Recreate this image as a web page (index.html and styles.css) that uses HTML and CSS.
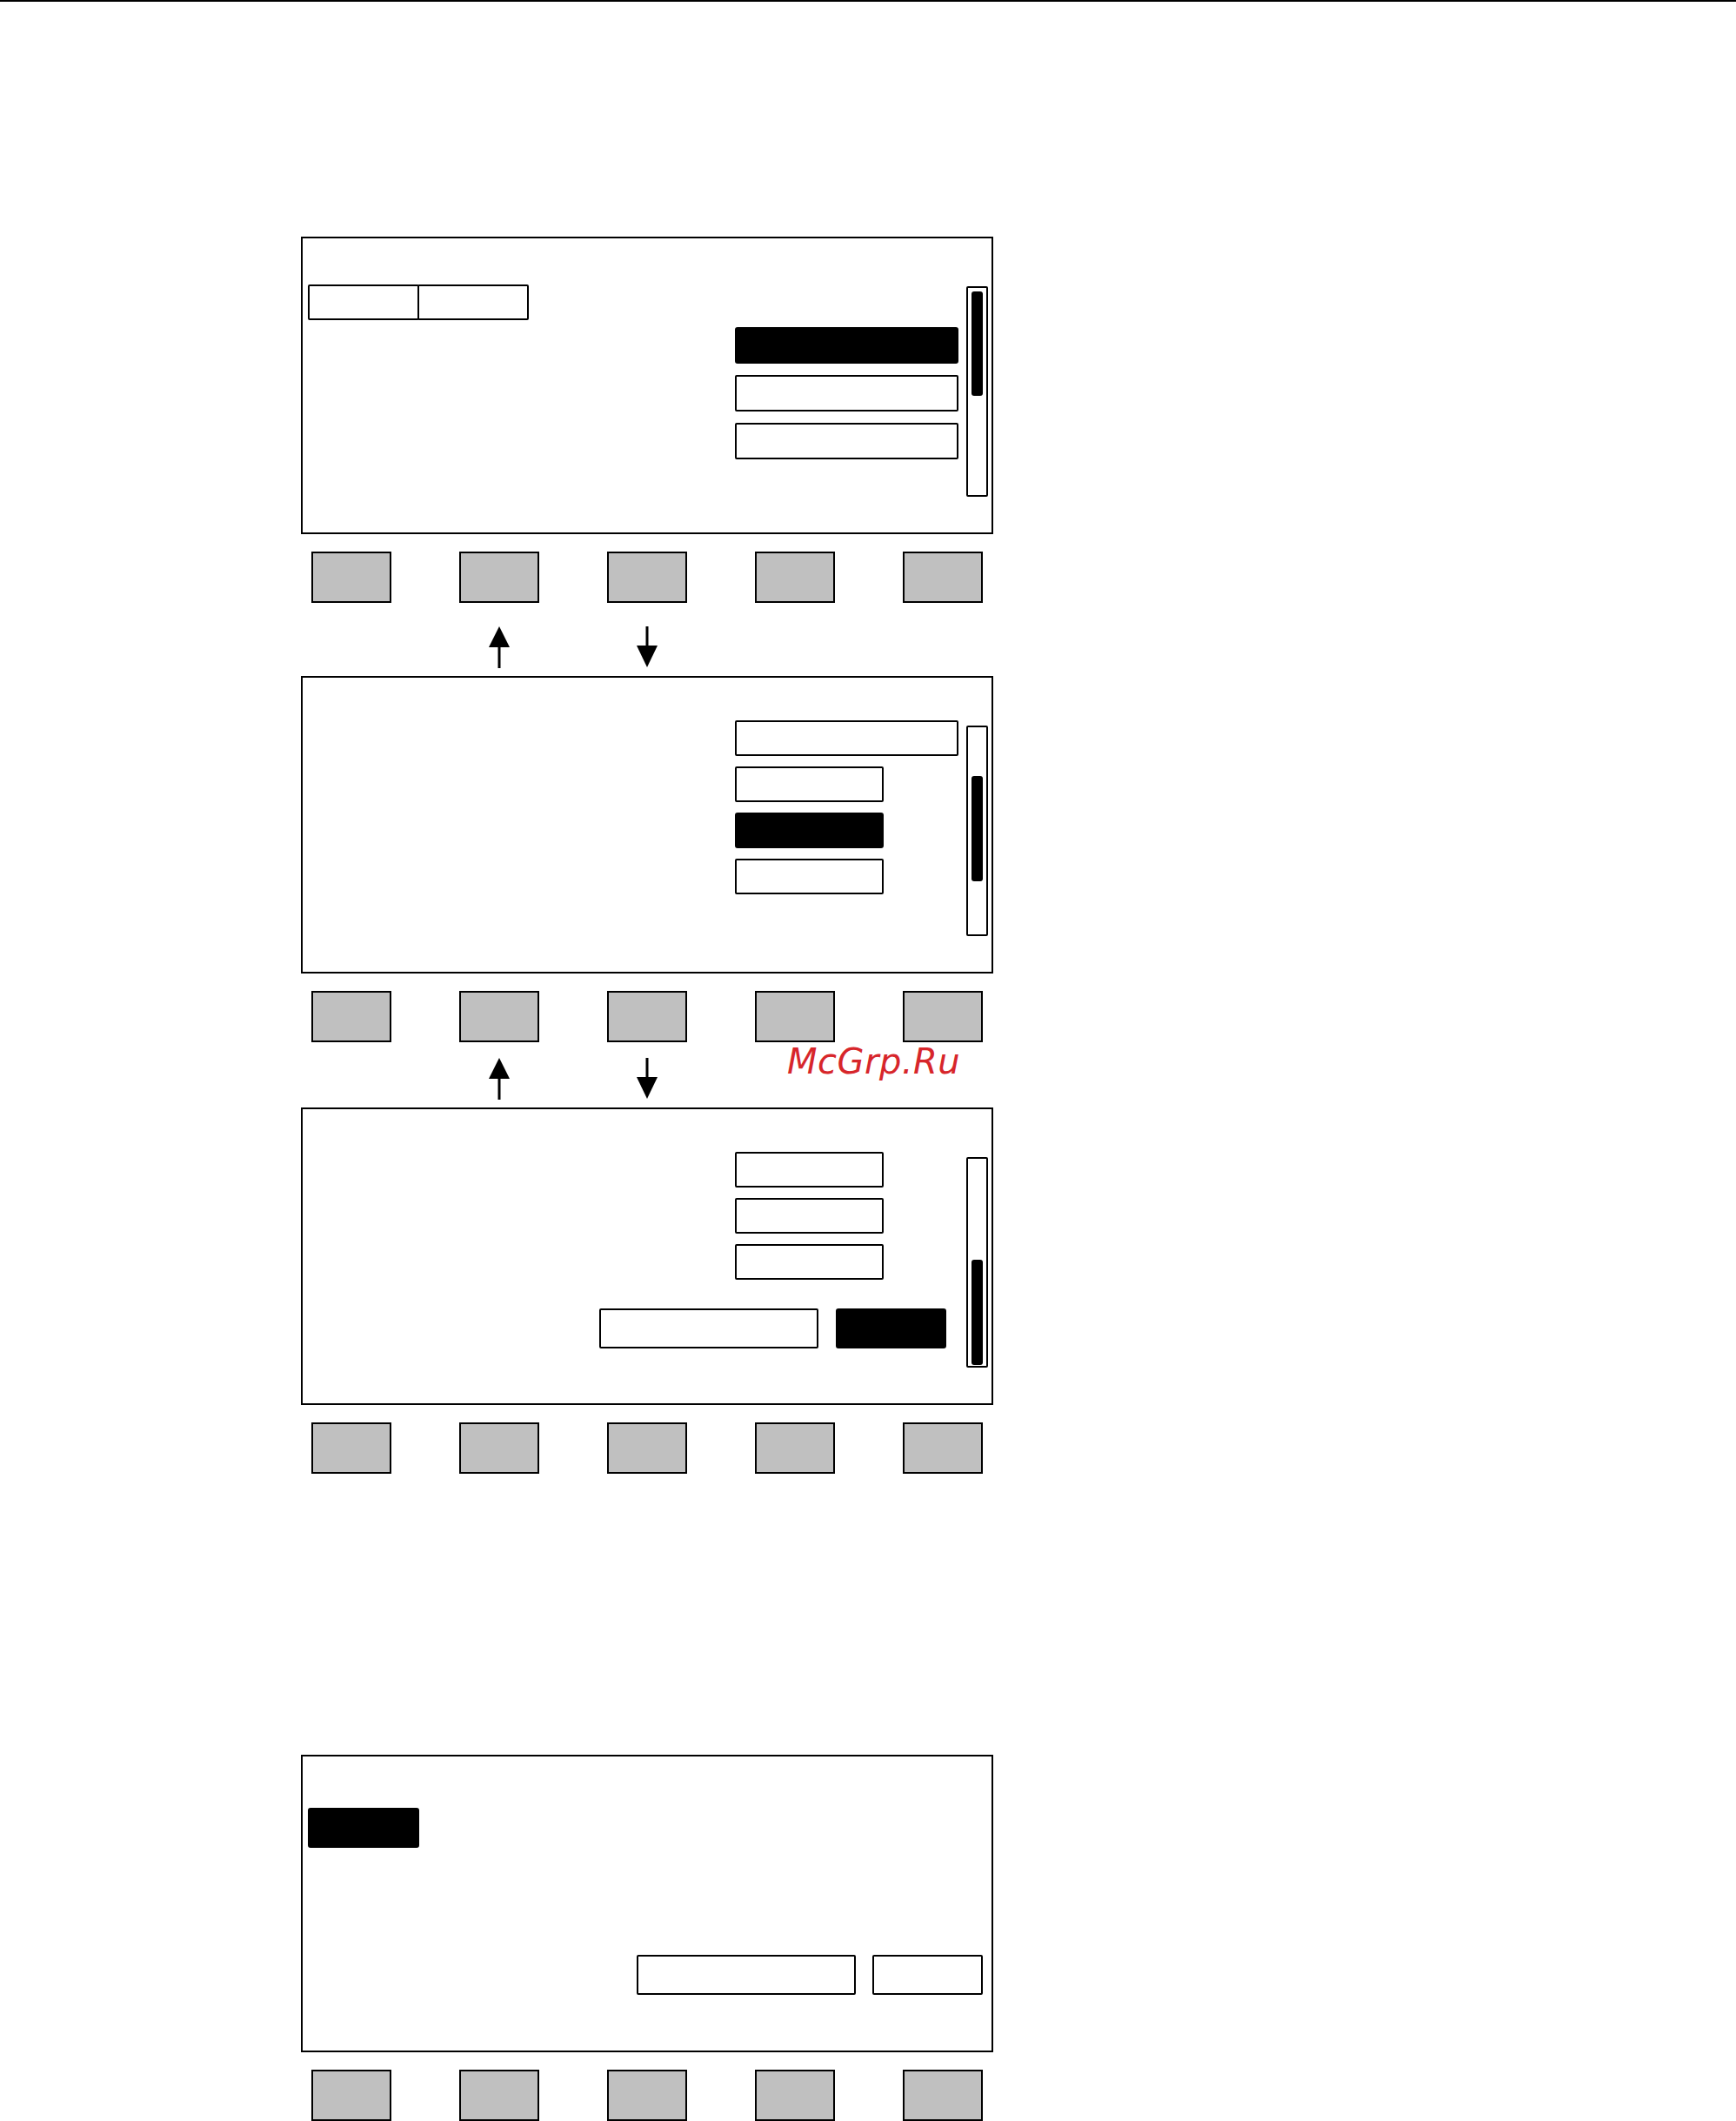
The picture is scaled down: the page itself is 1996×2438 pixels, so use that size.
FILE: index.html
```html
<!DOCTYPE html>
<html lang="en">
  <head>
    <meta charset="UTF-8" />
    <meta name="viewport" content="width=device-width, initial-scale=1.0" />
    <title>Menu navigation</title>
    <link rel="stylesheet" href="styles.css">
  </head>
  <body>
    <div class="top-rule"></div>

    <div class="sheet">
      <!-- screen 1: tab pair, list at its first entry -->
      <div class="screen">
        <div class="screen-body">
          <div class="tabs">
            <div class="field tab"></div>
            <div class="field tab"></div>
          </div>
          <div class="menu menu-after-tabs">
            <div class="field item selected"></div>
            <div class="field item"></div>
            <div class="field item"></div>
          </div>
        </div>
        <div class="scroll"><div class="thumb"></div></div>
      </div>
      <div class="softkeys">
        <div class="key"></div>
        <div class="key"></div>
        <div class="key"></div>
        <div class="key"></div>
        <div class="key"></div>
      </div>
      <div class="arrows">
        <div class="slot"></div>
        <div class="slot">
          <svg width="24" height="48" viewBox="0 0 24 48">
            <polygon points="12,0 24,24 0,24" />
            <rect x="10.5" y="22" width="3" height="26" />
          </svg>
        </div>
        <div class="slot">
          <svg width="24" height="48" viewBox="0 0 24 48">
            <rect x="10.5" y="0" width="3" height="24" />
            <polygon points="0,22 24,22 12,47" />
          </svg>
        </div>
        <div class="slot"></div>
        <div class="slot"></div>
      </div>

      <!-- screen 2: list scrolled, third entry selected -->
      <div class="screen">
        <div class="screen-body">
          <div class="menu">
            <div class="field item"></div>
            <div class="field item short"></div>
            <div class="field item short selected"></div>
            <div class="field item short"></div>
          </div>
        </div>
        <div class="scroll"><div class="thumb thumb-mid"></div></div>
      </div>
      <div class="softkeys">
        <div class="key"></div>
        <div class="key"></div>
        <div class="key"></div>
        <div class="key"></div>
        <div class="key"></div>
      </div>
      <div class="arrows arrows-tight">
        <div class="slot"></div>
        <div class="slot">
          <svg width="24" height="48" viewBox="0 0 24 48">
            <polygon points="12,0 24,24 0,24" />
            <rect x="10.5" y="22" width="3" height="26" />
          </svg>
        </div>
        <div class="slot">
          <svg width="24" height="48" viewBox="0 0 24 48">
            <rect x="10.5" y="0" width="3" height="24" />
            <polygon points="0,22 24,22 12,47" />
          </svg>
        </div>
        <div class="slot"></div>
        <div class="slot"></div>
      </div>

      <!-- screen 3: end of list, confirm button selected -->
      <div class="screen">
        <div class="screen-body">
          <div class="menu">
            <div class="field item short"></div>
            <div class="field item short"></div>
            <div class="field item short"></div>
          </div>
          <div class="actions">
            <div class="field input"></div>
            <div class="field button selected"></div>
          </div>
        </div>
        <div class="scroll"><div class="thumb thumb-end"></div></div>
      </div>
      <div class="softkeys">
        <div class="key"></div>
        <div class="key"></div>
        <div class="key"></div>
        <div class="key"></div>
        <div class="key"></div>
      </div>

      <!-- screen 4: entry dialog -->
      <div class="screen screen-dialog">
        <div class="screen-body">
          <div class="field label selected"></div>
          <div class="actions actions-dialog">
            <div class="field input"></div>
            <div class="field button"></div>
          </div>
        </div>
      </div>
      <div class="softkeys">
        <div class="key"></div>
        <div class="key"></div>
        <div class="key"></div>
        <div class="key"></div>
        <div class="key"></div>
      </div>
    </div>

    <div class="watermark">McGrp.Ru</div>
  </body>
</html>
```

FILE: styles.css
```css
body {
  margin: 0;
  background-color: #fff;
  font-family: "DejaVu Sans", "Liberation Sans", sans-serif;
}

.top-rule {
  height: 2px;
  background-color: #000;
}

.sheet {
  width: 796px;
  margin-left: 346px;
  padding-top: 270px;
}

/* display frame */
.screen {
  box-sizing: border-box;
  width: 796px;
  height: 342px;
  border: 2px solid #000;
  display: flex;
  align-items: flex-start;
  padding: 0 4px 0 6px;
}

.screen-body {
  flex: 1;
  display: flex;
  flex-direction: column;
}

.field {
  box-sizing: border-box;
  height: 41px;
  border: 2px solid #000;
  border-radius: 2px;
  background-color: #fff;
}

.field.selected {
  background-color: #000;
  border-radius: 3px;
}

.tabs {
  display: flex;
  margin-top: 53px;
}

.tab {
  width: 128px;
}

.tab + .tab {
  margin-left: -2px;
}

.menu {
  align-self: flex-end;
  width: 257px;
  display: flex;
  flex-direction: column;
  gap: 12px;
  margin-top: 49px;
}

.menu-after-tabs {
  margin-top: 8px;
  gap: 13px;
}

.menu-after-tabs .item {
  height: 42px;
}

.item.short {
  width: 171px;
}

.actions {
  display: flex;
  justify-content: flex-end;
  gap: 20px;
  margin-top: 33px;
  padding-right: 14px;
}

.actions .field {
  height: 46px;
}

.input {
  width: 252px;
}

.button {
  width: 127px;
}

.screen-dialog .label {
  width: 128px;
  height: 46px;
  margin-top: 59px;
}

.actions-dialog {
  margin-top: 123px;
  gap: 19px;
  padding-right: 6px;
}

/* scroll bar at the right of the list */
.scroll {
  box-sizing: border-box;
  width: 25px;
  height: 242px;
  margin: 55px 0 0 9px;
  border: 2px solid #000;
  border-radius: 2px;
  padding: 4px;
}

.thumb {
  height: 120px;
  background-color: #000;
  border-radius: 3px;
}

.thumb-mid {
  height: 121px;
  margin-top: 52px;
}

.thumb-end {
  height: 121px;
  margin-top: 112px;
}

/* soft keys under each display */
.softkeys {
  display: flex;
  justify-content: space-between;
  padding: 0 12px;
  margin-top: 20px;
}

.key {
  box-sizing: border-box;
  width: 92px;
  height: 59px;
  background-color: #c0c0c0;
  border: 2px solid #000;
}

.screen-dialog {
  margin-top: 323px;
}

.arrows {
  display: flex;
  justify-content: space-between;
  padding: 0 12px;
  height: 48px;
  margin: 27px 0 9px;
}

.arrows-tight {
  margin-top: 18px;
}

.slot {
  width: 92px;
  display: flex;
  justify-content: center;
}

.slot svg {
  display: block;
  fill: #000;
}

.watermark {
  position: absolute;
  top: 1200px;
  left: 905px;
  font-style: italic;
  font-size: 40px;
  line-height: 40px;
  letter-spacing: 0.5px;
  color: #d7262b;
}
```
